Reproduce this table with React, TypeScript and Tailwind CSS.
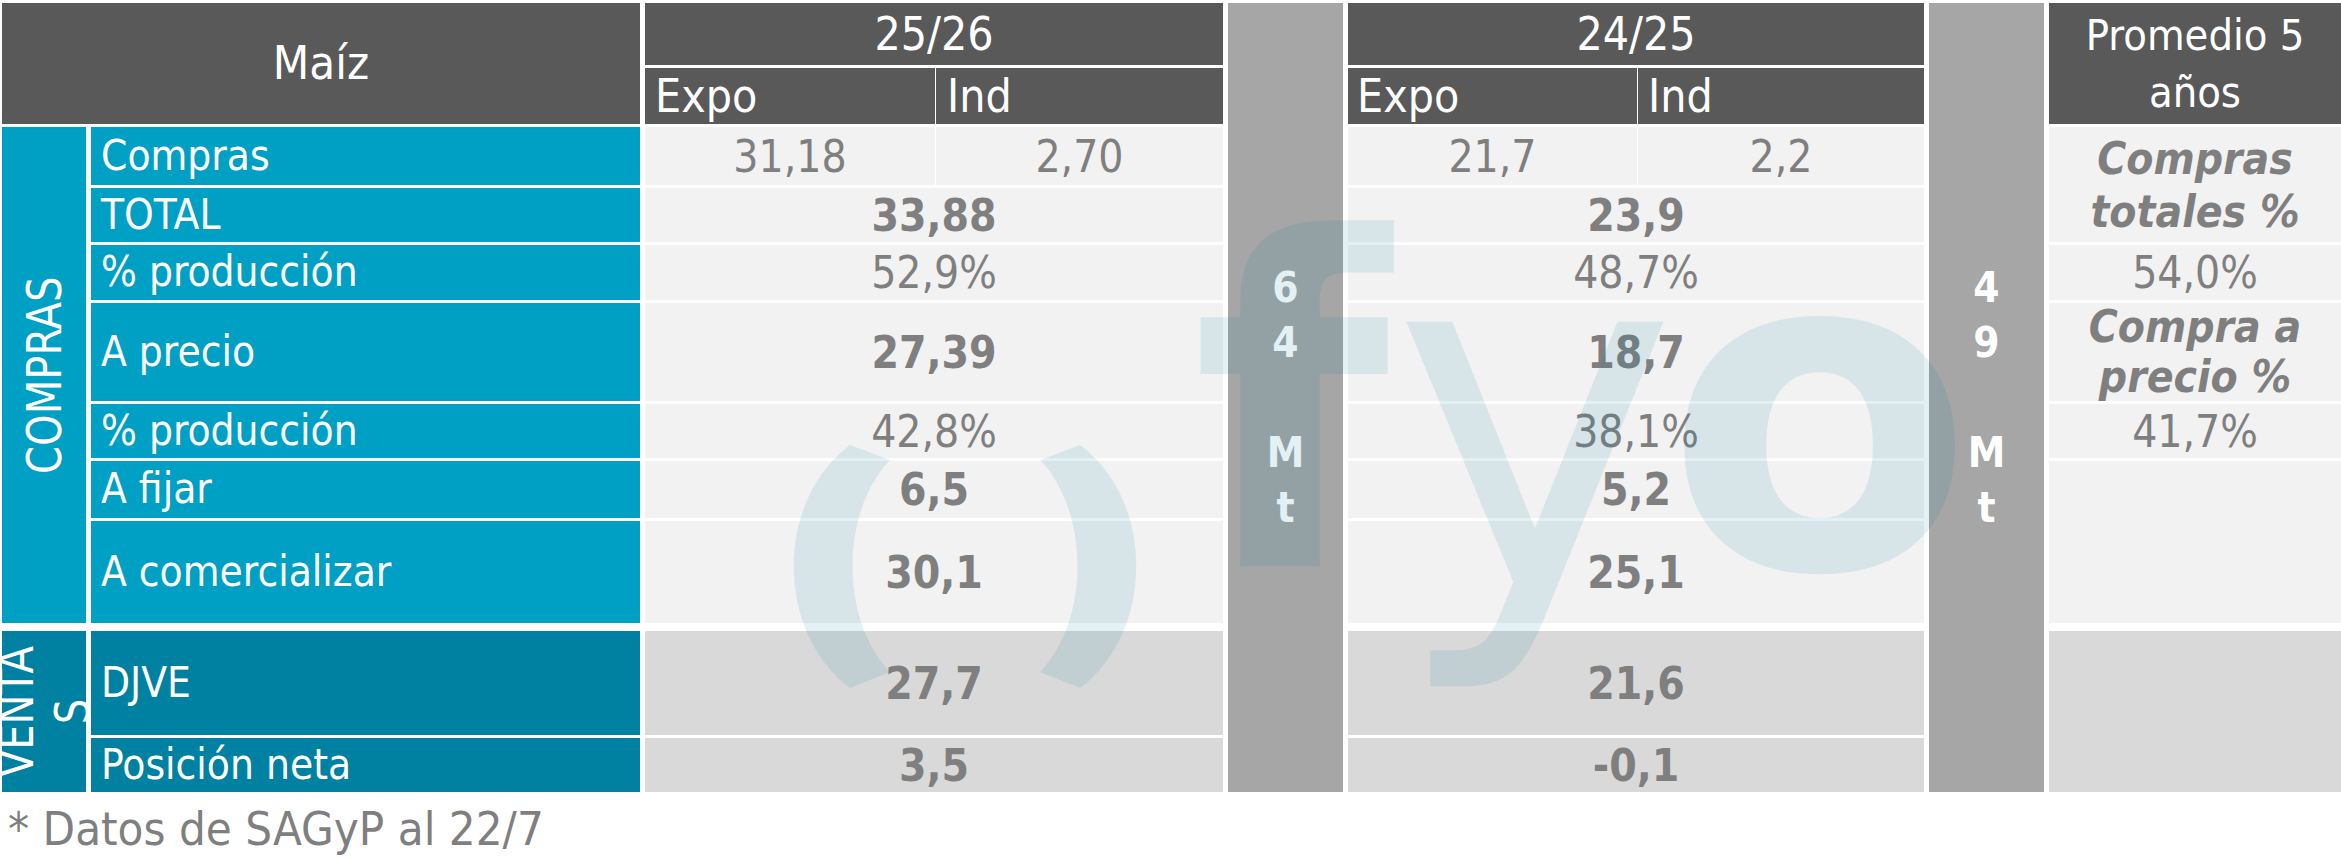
const TEAL = 'bg-[#009fc4]';
const TEAL_DARK = 'bg-[#0081a1]';

const labelClass = `flex items-center pl-[10px] text-[42px] leading-tight text-white whitespace-nowrap`;
const valueClass = 'flex items-center justify-center text-[44px] leading-tight text-[#7f7f7f] whitespace-nowrap';

type Row = {
  label: string;
  row: string;
  bold: boolean;
  a: string;
  b: string;
};

const COMPRAS: Row[] = [
  { label: 'TOTAL', row: 'row-start-4', bold: true, a: '33,88', b: '23,9' },
  { label: '% producción', row: 'row-start-5', bold: false, a: '52,9%', b: '48,7%' },
  { label: 'A precio', row: 'row-start-6', bold: true, a: '27,39', b: '18,7' },
  { label: '% producción', row: 'row-start-7', bold: false, a: '42,8%', b: '38,1%' },
  { label: 'A fijar', row: 'row-start-8', bold: true, a: '6,5', b: '5,2' },
  { label: 'A comercializar', row: 'row-start-9', bold: true, a: '30,1', b: '25,1' },
];

const VENTAS: Row[] = [
  { label: 'DJVE', row: 'row-start-11', bold: true, a: '27,7', b: '21,6' },
  { label: 'Posición neta', row: 'row-start-12', bold: true, a: '3,5', b: '-0,1' },
];

function GrayColumn({ col, lines }: { col: string; lines: string[] }) {
  return (
    <div className={`${col} row-start-1 row-span-12 flex flex-col items-center justify-center bg-[#a6a6a6] text-[42px] font-bold leading-[55px] text-white`}>
      {lines.map((l, i) => (
        <div key={i} className="h-[55px]">{l}</div>
      ))}
    </div>
  );
}

// fyo logo watermark, drawn over the table
function Watermark() {
  const family = 'DejaVu Sans, sans-serif';
  return (
    <svg
      className="pointer-events-none absolute left-0 top-0"
      width={2341}
      height={858}
      viewBox="0 0 2341 858"
    >
      <g fill="rgb(0,128,166)" fillOpacity={0.11}>
        <path d="M850 445 C775 500 775 632 850 688 L890 672 C840 620 840 512 890 460 Z" />
        <path d="M1080 445 C1155 500 1155 632 1080 688 L1040 672 C1090 620 1090 512 1040 460 Z" />
        <text x={1192} y={566} fontSize={455} fontWeight="bold" fontFamily={family}>f</text>
        <text x={1392} y={586} fontSize={483} fontFamily={family}>y</text>
        <text x={1665} y={568} fontSize={450} fontWeight="bold" fontFamily={family}>o</text>
      </g>
    </svg>
  );
}

export default function App() {
  return (
    <div className="relative h-[858px] w-[2341px] overflow-hidden bg-white font-['DejaVu_Sans_Condensed','DejaVu_Sans',sans-serif]">
      <div className="grid grid-cols-[84px_549px_578px_115px_576px_115px_292px] grid-rows-[62px_56px_58px_54px_55px_98px_54px_57px_102px_2px_104px_54px] gap-x-[5px] gap-y-[3px] pl-[2px] pt-[3px]">
        {/* header */}
        <div className="col-start-1 col-span-2 row-start-1 row-span-2 flex items-center justify-center bg-[#595959] text-[47px] text-white">
          Maíz
        </div>
        <div className="col-start-3 row-start-1 flex items-center justify-center bg-[#595959] text-[46px] text-white">
          25/26
        </div>
        <div className="col-start-3 row-start-2 flex gap-px bg-white text-[46px] text-white">
          <div className="flex w-[290px] items-center bg-[#595959] pl-[10px]">Expo</div>
          <div className="flex flex-1 items-center bg-[#595959] pl-[11px]">Ind</div>
        </div>
        <div className="col-start-5 row-start-1 flex items-center justify-center bg-[#595959] text-[46px] text-white">
          24/25
        </div>
        <div className="col-start-5 row-start-2 flex gap-px bg-white text-[46px] text-white">
          <div className="flex w-[289px] items-center bg-[#595959] pl-[9px]">Expo</div>
          <div className="flex flex-1 items-center bg-[#595959] pl-[10px]">Ind</div>
        </div>
        <div className="col-start-7 row-start-1 row-span-2 flex flex-col items-center justify-center bg-[#595959] text-[43px] leading-[57px] text-white">
          <span>Promedio 5</span>
          <span>años</span>
        </div>

        <GrayColumn col="col-start-4" lines={['6', '4', '', 'M', 't']} />
        <GrayColumn col="col-start-6" lines={['4', '9', '', 'M', 't']} />

        {/* COMPRAS */}
        <div className={`col-start-1 row-start-3 row-span-7 flex items-center justify-center ${TEAL}`}>
          <span className="rotate-180 scale-y-[0.93] text-[48px] leading-[56px] text-white [writing-mode:vertical-rl]">
            COMPRAS
          </span>
        </div>
        <div className={`col-start-2 row-start-3 ${labelClass} ${TEAL}`}>Compras</div>
        <div className="col-start-3 row-start-3 flex gap-px bg-white">
          <div className={`w-[290px] bg-[#f2f2f2] ${valueClass}`}>31,18</div>
          <div className={`flex-1 bg-[#f2f2f2] ${valueClass}`}>2,70</div>
        </div>
        <div className="col-start-5 row-start-3 flex gap-px bg-white">
          <div className={`w-[289px] bg-[#f2f2f2] ${valueClass}`}>21,7</div>
          <div className={`flex-1 bg-[#f2f2f2] ${valueClass}`}>2,2</div>
        </div>

        {COMPRAS.map((r, i) => (
          <div key={i} className="contents">
            <div className={`col-start-2 ${r.row} ${labelClass} ${TEAL}`}>{r.label}</div>
            <div className={`col-start-3 ${r.row} bg-[#f2f2f2] ${valueClass} ${r.bold ? 'font-bold' : ''}`}>{r.a}</div>
            <div className={`col-start-5 ${r.row} bg-[#f2f2f2] ${valueClass} ${r.bold ? 'font-bold' : ''}`}>{r.b}</div>
          </div>
        ))}

        {/* promedio column */}
        <div className="col-start-7 row-start-3 row-span-2 flex flex-col items-center justify-center bg-[#f2f2f2] text-[44px] font-bold italic leading-[53px] text-[#7f7f7f]">
          <span>Compras</span>
          <span>totales %</span>
        </div>
        <div className={`col-start-7 row-start-5 bg-[#f2f2f2] ${valueClass}`}>54,0%</div>
        <div className="col-start-7 row-start-6 flex flex-col items-center justify-center bg-[#f2f2f2] text-[44px] font-bold italic leading-[50px] text-[#7f7f7f]">
          <span>Compra a</span>
          <span>precio %</span>
        </div>
        <div className={`col-start-7 row-start-7 bg-[#f2f2f2] ${valueClass}`}>41,7%</div>
        <div className="col-start-7 row-start-8 row-span-2 bg-[#f2f2f2]" />

        {/* VENTAS */}
        <div className={`col-start-1 row-start-11 row-span-2 flex items-center justify-center ${TEAL_DARK}`}>
          <span className="rotate-180 scale-y-[0.93] text-center text-[48px] leading-[56px] text-white [writing-mode:vertical-rl]">
            VENTA
            <br />S
          </span>
        </div>
        {VENTAS.map((r, i) => (
          <div key={i} className="contents">
            <div className={`col-start-2 ${r.row} ${labelClass} ${TEAL_DARK}`}>{r.label}</div>
            <div className={`col-start-3 ${r.row} bg-[#d9d9d9] ${valueClass} font-bold`}>{r.a}</div>
            <div className={`col-start-5 ${r.row} bg-[#d9d9d9] ${valueClass} font-bold`}>{r.b}</div>
          </div>
        ))}
        <div className="col-start-7 row-start-11 row-span-2 bg-[#d9d9d9]" />
      </div>

      <div className="mt-[11px] pl-[8px] text-[47px] leading-[52px] text-[#7f7f7f]">* Datos de SAGyP al 22/7</div>

      <Watermark />
    </div>
  );
}
